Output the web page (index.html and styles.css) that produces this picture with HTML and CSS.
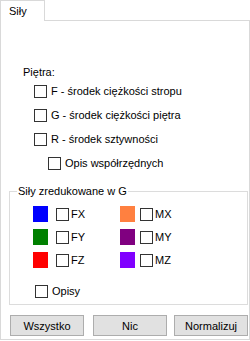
FILE: index.html
```html
<!DOCTYPE html>
<html lang="pl">
<head>
<meta charset="utf-8">
<link rel="stylesheet" href="styles.css">
</head>
<body>
<div class="window">
  <div class="tabs">
    <div class="tab">Siły</div>
    <div class="tab-fill"></div>
  </div>
  <div class="panel">
    <div class="section-label">Piętra:</div>
    <div class="check-list">
      <div class="check-row"><span class="cb"></span><span>F - środek ciężkości stropu</span></div>
      <div class="check-row"><span class="cb"></span><span>G - środek ciężkości piętra</span></div>
      <div class="check-row"><span class="cb"></span><span>R - środek sztywności</span></div>
      <div class="check-row indent"><span class="cb"></span><span>Opis współrzędnych</span></div>
    </div>
    <fieldset class="group">
      <legend>Siły zredukowane w G</legend>
      <div class="force-grid">
        <div class="force"><span class="swatch c-fx"></span><span class="cb"></span><span class="fl">FX</span></div>
        <div class="force"><span class="swatch c-mx"></span><span class="cb"></span><span class="fl">MX</span></div>
        <div class="force"><span class="swatch c-fy"></span><span class="cb"></span><span class="fl">FY</span></div>
        <div class="force"><span class="swatch c-my"></span><span class="cb"></span><span class="fl">MY</span></div>
        <div class="force"><span class="swatch c-fz"></span><span class="cb"></span><span class="fl">FZ</span></div>
        <div class="force"><span class="swatch c-mz"></span><span class="cb"></span><span class="fl">MZ</span></div>
      </div>
      <div class="check-row opisy"><span class="cb"></span><span>Opisy</span></div>
    </fieldset>
    <div class="buttons">
      <button class="btn b1">Wszystko</button>
      <button class="btn b2">Nic</button>
      <button class="btn b3">Normalizuj</button>
    </div>
  </div>
</div>
</body>
</html>
```
FILE: styles.css
```css
html, body {
  margin: 0;
  padding: 0;
  background: #ffffff;
}
body {
  width: 250px;
  height: 341px;
  overflow: hidden;
  font-family: "Liberation Sans", Arial, sans-serif;
  font-size: 11px;
  color: #000;
}
.window {
  display: flex;
  flex-direction: column;
}
.tabs {
  display: flex;
  height: 21px;
}
.tab {
  border: 1px solid #d9d9d9;
  border-bottom: none;
  padding-left: 8px;
  box-sizing: border-box;
  width: 45px;
  height: 21px;
  line-height: 20px;
}
.tab-fill {
  flex: 1;
  border-bottom: 1px solid #d9d9d9;
}
.panel {
  height: 319px;
  box-sizing: border-box;
  border: 1px solid #d9d9d9;
  border-top: none;
  padding-top: 45px;
  display: flex;
  flex-direction: column;
}
.section-label {
  margin-left: 22px;
  line-height: 13px;
  height: 13px;
}
.check-list {
  display: flex;
  flex-direction: column;
  gap: 11px;
  margin-top: 6px;
  margin-left: 33px;
}
.check-row {
  display: flex;
  align-items: center;
  height: 13px;
  line-height: 13px;
}
.check-row .cb {
  margin-right: 4px;
}
.check-row.indent {
  margin-left: 14px;
}
.cb {
  width: 13px;
  height: 13px;
  box-sizing: border-box;
  border: 1px solid #333333;
  background: #fff;
  margin-right: 2px;
  flex: none;
}
.group {
  margin: 15px 1px 0 8px;
  padding: 0;
  border: 1px solid #dcdcdc;
  height: 120px;
  box-sizing: border-box;
  min-width: 0;
}
.group legend {
  margin-left: 7px;
  padding: 0 1px;
  line-height: 12px;
}
.force-grid {
  display: grid;
  grid-template-columns: 87px 90px;
  row-gap: 7px;
  margin-top: 9px;
  margin-left: 23px;
}
.force {
  display: flex;
  align-items: center;
  height: 16px;
}
.swatch {
  width: 15px;
  height: 16px;
  flex: none;
  margin-right: 8px;
}
.force:nth-child(even) .swatch {
  margin-right: 5px;
}
.c-fx { background: #0000ff; }
.c-fy { background: #008000; }
.c-fz { background: #ff0000; }
.c-mx { background: #ff8040; }
.c-my { background: #800080; }
.c-mz { background: #8000ff; }
.check-row.opisy {
  margin-top: 17px;
  margin-left: 25px;
}
.buttons {
  display: flex;
  margin-top: 10px;
  margin-left: 9px;
}
.btn {
  height: 21px;
  width: 74px;
  box-sizing: border-box;
  border: 1px solid #adadad;
  background: #e1e1e1;
  font-family: "Liberation Sans", Arial, sans-serif;
  font-size: 11px;
  color: #000;
  padding: 0;
  margin: 0;
}
.b2 {
  margin-left: 9px;
}
.b3 {
  margin-left: 7px;
}
```
